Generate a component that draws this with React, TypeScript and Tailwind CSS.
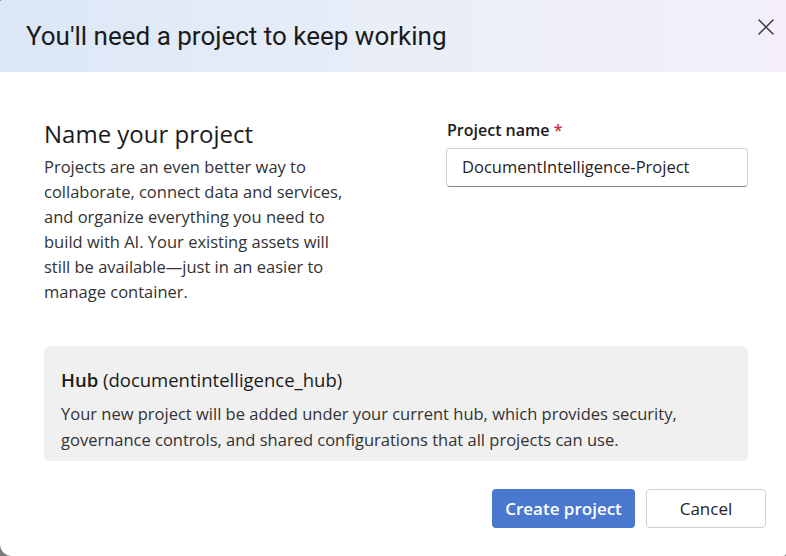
export default function App() {
  return (
    <div className="w-[786px] h-[556px] bg-[#7a7a7a] font-['Open_Sans',sans-serif] text-[#242424]">
      <div className="w-full h-full bg-white rounded-tl-[3px] rounded-bl-[12px] rounded-br-[3px] overflow-hidden flex flex-col">
        {/* header */}
        <div className="h-[72px] shrink-0 flex items-center justify-between pl-[26px] pr-[12px] bg-[linear-gradient(90deg,#dbe7f6_0%,#e9eef8_50%,#f4effa_100%)]">
          <h1 className="text-[26px] leading-none font-['Roboto',sans-serif] font-normal text-[#1b1b1b]">
            You'll need a project to keep working
          </h1>
          <button className="w-[16px] h-[16px] self-start mt-[19px] text-[#3a3a3a]">
            <svg viewBox="0 0 16 16" className="w-[16px] h-[16px]" fill="none" stroke="currentColor" strokeWidth={1.5} strokeLinecap="round">
              <path d="M1 1 L15 15 M15 1 L1 15" />
            </svg>
          </button>
        </div>

        {/* body */}
        <div className="flex-1 flex flex-col pl-[44px] pr-[38px] pt-[46px]">
          <div className="flex justify-between">
            <div className="w-[312px]">
              <h2 className="text-[24px] leading-[32px] font-normal text-[#1b1b1b]">Name your project</h2>
              <p className="mt-[4px] text-[16.5px] leading-[25px] text-[#333]">
                Projects are an even better way to collaborate, connect data and services, and organize everything you need to build with AI. Your existing assets will still be available—just in an easier to manage container.
              </p>
            </div>
            <div className="w-[302px] pt-[1px]">
              <label className="block pl-[1px] text-[16px] leading-[22px] font-semibold text-[#1b1b1b]">
                Project name <span className="text-[#c4314b]">*</span>
              </label>
              <div className="mt-[7px] h-[39px] rounded-[4px] border border-[#d1d1d1] border-b-[#8a8a8a] flex items-center px-[15px] text-[16.5px] text-[#242424]">
                DocumentIntelligence-Project
              </div>
            </div>
          </div>

          <div className="mt-[42px] bg-[#f0f0f0] rounded-[6px] px-[17px] pt-[21px] pb-[8px]">
            <div className="text-[18.5px] leading-[26px] text-[#1b1b1b]">
              <span className="font-semibold">Hub</span> (documentintelligence_hub)
            </div>
            <p className="mt-[8px] text-[16.5px] leading-[26px] text-[#333]">
              Your new project will be added under your current hub, which provides security,<br />
              governance controls, and shared configurations that all projects can use.
            </p>
          </div>

          <div className="mt-[28px] flex justify-end gap-[11px] -mr-[18px]">
            <button className="h-[39px] w-[143px] rounded-[4px] bg-[#4a78cf] text-white text-[17px] font-semibold">
              Create project
            </button>
            <button className="h-[39px] w-[120px] rounded-[4px] bg-white border border-[#d1d1d1] text-[17px] text-[#242424]">
              Cancel
            </button>
          </div>
        </div>
      </div>
    </div>
  );
}
